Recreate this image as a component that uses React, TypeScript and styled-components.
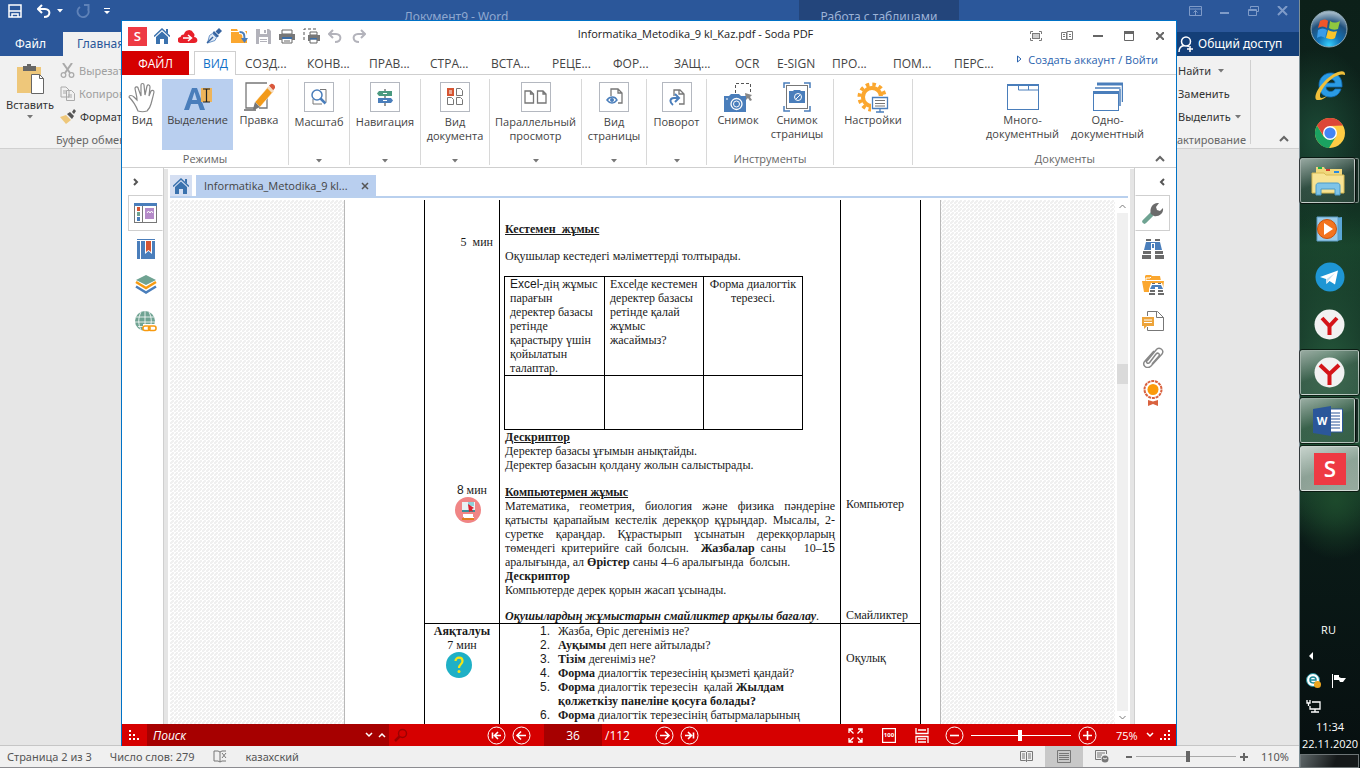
import React from 'react';
import styled, { createGlobalStyle, css } from 'styled-components';

const ui = `'Open Sans', 'Noto Sans', sans-serif`;
const wordFont = `'Noto Sans', 'Open Sans', sans-serif`;
const steel = '#4a7ebb';
const amber = '#fba72f';
const grey = '#7a7a7a';

const Global = createGlobalStyle`
  *, *::before, *::after { box-sizing: border-box; }
  body { margin: 0; font-family: ${ui}; font-size: 12px; color: #444; }
  button { font: inherit; color: inherit; background: none; border: 0; padding: 0; cursor: pointer; }
  input { font: inherit; border: 0; margin: 0; padding: 0; outline: none; }
  svg { display: block; flex: none; }
  p, ol { margin: 0; padding: 0; }
`;

/* ---------- Desktop ---------- */

const Desktop = styled.div`
  display: flex;
  height: 100vh;
  overflow: hidden;
`;

/* ---------- Word window ---------- */

const WordWindow = styled.div`
  flex: 1;
  min-width: 0;
  position: relative;
  display: flex;
  flex-direction: column;
  background: #e6e6e6;
  font-family: ${wordFont};
`;

const WordTitle = styled.header`
  display: flex;
  align-items: flex-start;
  height: 32px;
  background: #2b579a;
  color: #8fa8d0;
`;

const QuickAccess = styled.div`
  display: flex;
  align-items: center;
  height: 22px;
  width: 404px;
  padding-left: 8px;
`;

const WordCaption = styled.span`
  width: 395px;
  line-height: 34px;
`;

const ContextTab = styled.span`
  width: 160px;
  height: 32px;
  line-height: 34px;
  background: #23457b;
  text-align: center;
  color: #9db3d8;
`;

const WordControls = styled.div`
  margin-left: auto;
  display: flex;
  align-items: center;
  height: 22px;
  gap: 15px;
  padding-right: 10px;
`;

const WordTabs = styled.div`
  display: flex;
  height: 24px;
  background: #2b579a;
  color: #fff;
  line-height: 24px;
`;

const WordTab = styled.button<{ $on?: boolean }>`
  padding: 0 ${p => (p.$on ? 14 : 15)}px;
  width: ${p => (p.$on ? 100 : 63)}px;
  text-align: left;
  font-size: 12px;
  ${p => p.$on && css`background: #f1f1f1; color: #2b579a;`}
`;

const ShareButton = styled.button`
  margin-left: auto;
  width: 132px;
  padding-left: 11px;
  display: flex;
  align-items: center;
  gap: 4px;
  background: #143f78;
  color: #fff;
  white-space: nowrap;
`;

const WordRibbon = styled.div`
  display: flex;
  justify-content: space-between;
  height: 93px;
  background: #f1f1f1;
  border-bottom: 1px solid #d0d0d0;
`;

const ClipboardGroup = styled.div`
  display: grid;
  grid-template-columns: 60px 128px;
  grid-template-rows: 75px 17px;
`;

const PasteButton = styled.button`
  display: flex;
  flex-direction: column;
  align-items: center;
  padding-top: 7px;
  color: #333;
  font-size: 11px;
  line-height: 20px;
`;

const CommandList = styled.div`
  display: flex;
  flex-direction: column;
  padding-top: 3px;
`;

const Command = styled.button<{ $dim?: boolean }>`
  display: flex;
  align-items: center;
  gap: 4px;
  height: 23px;
  font-size: 11px;
  color: ${p => (p.$dim ? '#a0a0a0' : '#333')};
  white-space: nowrap;
`;

const GroupName = styled.span`
  grid-column: 1 / 3;
  text-align: center;
  font-size: 11px;
  color: #666;
  line-height: 18px;
  white-space: nowrap;
`;

const EditingGroup = styled.div`
  display: flex;
`;

const EditingBody = styled.div`
  margin-top: 4px;
  height: 84px;
  width: 94px;
  padding-right: 4px;
  border-right: 1px solid #d0d0d0;
  text-align: right;
`;

const EditingList = styled.div`
  margin-top: -4px;
  padding: 3px 0 0 21px;
  height: 75px;
`;

const Collapse = styled.button`
  width: 48px;
  display: flex;
  align-items: flex-end;
  justify-content: center;
  padding: 0 0 5px 18px;
`;

const WordStatus = styled.footer`
  margin-top: auto;
  height: 23px;
  display: flex;
  align-items: center;
  background: #f0f0f0;
  border-top: 1px solid #c6c6c6;
  border-bottom: 1px solid #8c8c90;
  color: #555;
  font-size: 11px;
  padding-left: 7px;
`;

const StatusItem = styled.span`
  margin-right: 18px;
  white-space: nowrap;
`;

const StatusRight = styled.div`
  margin-left: auto;
  display: flex;
  align-items: center;
  height: 100%;
  padding-right: 10px;
`;

const ViewButton = styled.button<{ $on?: boolean }>`
  width: 38px;
  height: 100%;
  display: flex;
  align-items: center;
  justify-content: center;
  background: ${p => (p.$on ? '#c8c8c8' : 'none')};
`;

const StepButton = styled.button`
  width: 15px;
  height: 20px;
  display: flex;
  align-items: center;
  justify-content: center;
`;

const Range = styled.input<{ $c: string; $t: string }>`
  appearance: none;
  width: 100px;
  height: 12px;
  background: linear-gradient(${p => p.$c}, ${p => p.$c}) center / 100% 1px no-repeat;
  &::-webkit-slider-thumb {
    appearance: none;
    width: 4px;
    height: 11px;
    background: ${p => p.$t};
    border: 0;
  }
`;

const ZoomValue = styled.span`
  width: 38px;
  text-align: right;
`;

/* ---------- Soda PDF window ---------- */

const SodaWindow = styled.section`
  position: absolute;
  inset: 20px 122px 22px 121px;
  display: flex;
  flex-direction: column;
  background: #fff;
  border: 1px solid #0072c6;
  border-bottom: 0;
  font-family: ${ui};
`;

const SodaTitle = styled.header`
  display: flex;
  align-items: center;
  height: 30px;
  padding: 0 1px 0 6px;
`;

const ToolButton = styled.button<{ $w?: number; $mr?: number }>`
  width: ${p => p.$w || 24}px;
  height: 26px;
  margin-right: ${p => p.$mr || 0}px;
  display: flex;
  align-items: center;
  justify-content: center;
`;

const Caption = styled.h1`
  flex: 1;
  margin: 0;
  text-align: center;
  font-size: 11px;
  line-height: 26px;
  height: 30px;
  font-weight: 400;
  color: #222;
  white-space: nowrap;
`;

const TabRow = styled.nav`
  display: flex;
  height: 24px;
  border-bottom: 1px solid #cfcfcf;
`;

const FileTab = styled.button`
  width: 67px;
  height: 24px;
  margin-right: 5px;
  background: #d50000;
  color: #fff;
`;

const Tab = styled.button<{ $w?: number; $on?: boolean }>`
  width: ${p => p.$w || 61}px;
  height: 24px;
  text-align: left;
  padding: 0 0 0 9px;
  white-space: nowrap;
  ${p => p.$on && css`
    padding: 0 8px;
    background: #fff;
    color: #1070c8;
    border: 1px solid #cfcfcf;
    border-bottom: 0;
  `}
`;

const Account = styled.div`
  margin-left: auto;
  display: flex;
  align-items: center;
  gap: 6px;
  height: 16px;
  padding-right: 18px;
  font-size: 11px;
  a { color: #2a63ae; text-decoration: none; white-space: nowrap; }
`;

const Ribbon = styled.div`
  display: flex;
  height: 93px;
  padding-top: 4px;
  border-bottom: 1px solid #cfcfcf;
`;

const Group = styled.div<{ $w?: number }>`
  ${p => (p.$w ? css`width: ${p.$w}px;` : css`flex: 1;`)}
  height: 86px;
  border-right: ${p => (p.$w ? '1px solid #d8d8d8' : '0')};
  display: flex;
  flex-direction: column;
  flex-shrink: ${p => (p.$w ? 0 : 1)};
`;

const GroupButtons = styled.div<{ $at?: string }>`
  display: flex;
  height: 71px;
  justify-content: ${p => p.$at || 'center'};
  padding-right: ${p => (p.$at === 'flex-end' ? 26 : 0)}px;
`;

const GroupFoot = styled.div<{ $end?: boolean; $low?: boolean }>`
  display: flex;
  align-items: center;
  justify-content: ${p => (p.$end ? 'flex-end' : 'center')};
  gap: 60px;
  padding: ${p => (p.$low ? 6 : 2)}px ${p => (p.$end ? 11 : 0)}px 0 0;
  height: 15px;
  font-size: 11px;
  color: #666;
`;

const BigButton = styled.button<{ $w: number; $on?: boolean }>`
  width: ${p => p.$w}px;
  height: 71px;
  padding-top: 2px;
  display: flex;
  flex-direction: column;
  align-items: center;
  font-size: 11px;
  line-height: 14px;
  background: ${p => (p.$on ? '#b9cfef' : 'none')};
`;

const IconSlot = styled.span`
  display: flex;
  align-items: center;
  justify-content: center;
  height: 32px;
`;

const IconBox = styled.span`
  width: 30px;
  height: 30px;
  margin: 1px 0 3px;
  border: 1px solid #b4b8c0;
  display: flex;
  align-items: center;
  justify-content: center;
`;

const Body = styled.div`
  flex: 1;
  min-height: 0;
  display: flex;
`;

const Side = styled.aside<{ $right?: boolean }>`
  width: 42px;
  display: flex;
  flex-direction: column;
  align-items: ${p => (p.$right ? 'flex-start' : 'flex-end')};
  padding-top: 1px;
  ${p => (p.$right ? 'border-left' : 'border-right')}: 1px solid #cfcfcf;
`;

const SideToggle = styled.button<{ $right?: boolean }>`
  width: 41px;
  height: 26px;
  display: flex;
  align-items: center;
  justify-content: ${p => (p.$right ? 'flex-end' : 'flex-start')};
  padding: 0 10px;
`;

const SideButton = styled.button<{ $on?: boolean; $right?: boolean }>`
  width: 35px;
  height: 36px;
  display: flex;
  align-items: center;
  justify-content: center;
  ${p => p.$on && css`
    border: 1px solid #cfcfcf;
    border-${p.$right ? 'left' : 'right'}-color: #fff;
  `}
`;

const Splitter = styled.div`
  width: 4px;
  margin-top: 1px;
  background: #e5e5e5;
`;

const Center = styled.main`
  flex: 1;
  min-width: 0;
  display: flex;
  flex-direction: column;
  padding: 0 2px;
`;

const DocTabs = styled.div`
  display: flex;
  gap: 4px;
  height: 30px;
  padding-top: 7px;
  border-bottom: 2px solid #b9d0ee;
  margin-bottom: 2px;
`;

const HomeTab = styled.button`
  width: 22px;
  background: #d5dff2;
  display: flex;
  align-items: center;
  justify-content: center;
`;

const DocTab = styled.div`
  display: flex;
  align-items: center;
  justify-content: space-between;
  width: 180px;
  padding: 0 7px 0 8px;
  background: #b9cfef;
  font-size: 11px;
  white-space: nowrap;
`;

const Viewer = styled.div`
  flex: 1;
  min-height: 0;
  display: flex;
`;

const Canvas = styled.div`
  flex: 1;
  min-width: 0;
  overflow: hidden;
  display: flex;
  justify-content: center;
  align-items: flex-start;
  background: linear-gradient(135deg, #fff 0 37%, #f0f0f0 37% 63%, #fff 63%) 0 0 / 4px 4px;
`;

const Scroll = styled.div`
  width: 13px;
  padding-left: 2px;
  display: flex;
  flex-direction: column;
`;

const ScrollButton = styled.button`
  height: 13px;
  display: flex;
  align-items: center;
  justify-content: center;
`;

const Track = styled.div`
  flex: 1;
  background: #f0f0f0;
  display: flex;
  flex-direction: column;
`;

const TrackSpace = styled.div<{ $grow: number }>`
  flex: ${p => p.$grow};
`;

const Thumb = styled.div`
  height: 20px;
  background: #dadada;
`;

/* ---------- Document page ---------- */

const Page = styled.article`
  width: 597px;
  padding-left: 79px;
  background: #fff;
  border: solid #b8b8b8;
  border-width: 0 1px;
  font-family: 'Liberation Serif', serif;
  font-size: 12px;
  line-height: 14px;
  color: #1a1a1a;
  white-space: nowrap;
`;

const Plan = styled.table`
  border-collapse: collapse;
  table-layout: fixed;
  width: 497px;
  td { vertical-align: top; padding: 0; border: 1px solid #000; }
  tr:first-child td { border-top: 0; }
`;

const Inner = styled.table`
  border-collapse: collapse;
  table-layout: fixed;
  width: 299px;
  margin-left: -1px;
  && td { border: 1px solid #000; padding: 0 5px; }
  && tr:first-child td { border-top: 1px solid #000; }
  && tr:first-child td:last-child { text-align: center; }
  tr:last-child { height: 54px; }
`;

const CellBody = styled.div<{ $top?: number; $align?: string }>`
  padding: ${p => p.$top || 0}px 5px 0;
  text-align: ${p => p.$align || 'left'};
`;

const Gap = styled.div<{ $h: number }>`
  height: ${p => p.$h}px;
`;

const Heading = styled.p`
  font-weight: 700;
  text-decoration: underline;
`;

const Justified = styled.p`
  text-align: justify;
  text-align-last: justify;
`;

const Sans = styled.span`
  font-family: 'Liberation Sans', sans-serif;
  line-height: 12px;
`;

const TimeBlock = styled.div<{ $r: number }>`
  padding-right: ${p => p.$r}px;
  text-align: right;
`;

const Badge = styled.div<{ $r: number }>`
  display: flex;
  justify-content: flex-end;
  padding-right: ${p => p.$r}px;
`;

const Questions = styled.ol`
  list-style: none;
  counter-reset: q;
  padding-left: 40px;
  li { display: flex; counter-increment: q; }
  li::before {
    content: counter(q) '.';
    width: 18px;
    font-family: 'Liberation Sans', sans-serif;
  }
`;

/* ---------- Soda footer ---------- */

const SodaFooter = styled.footer`
  height: 22px;
  display: flex;
  align-items: center;
  background: #d60000;
  color: #fff;
`;

const Grip = styled.div`
  width: 25px;
  padding-left: 7px;
`;

const SearchBox = styled.label`
  width: 242px;
  height: 22px;
  display: flex;
  align-items: center;
  gap: 5px;
  padding: 0 3px 0 6px;
  background: #a60000;
  input {
    flex: 1;
    min-width: 0;
    background: none;
    color: #fff;
    font-style: italic;
    &::placeholder { color: #fff; }
  }
`;

const SearchGo = styled.button`
  width: 24px;
  padding-left: 5px;
  margin-right: 71px;
`;

const Pager = styled.div`
  display: flex;
  align-items: center;
  flex: 1;
`;

const RoundButton = styled.button`
  width: 25px;
  display: flex;
  justify-content: center;
`;

const PageField = styled.input`
  width: 58px;
  height: 22px;
  margin: 0 3px 0 10px;
  background: #a60000;
  color: #fff;
  text-align: center;
`;

const PageCount = styled.span`
  width: 47px;
`;

const FootRight = styled.div`
  display: flex;
  align-items: center;
`;

const FootButton = styled.button<{ $w?: number }>`
  width: ${p => p.$w || 33}px;
  display: flex;
  justify-content: center;
`;

const FootZoom = styled.span`
  margin-left: 12px;
  width: 24px;
  font-size: 11px;
`;

/* ---------- Taskbar ---------- */

const Taskbar = styled.aside`
  width: 61px;
  flex: none;
  display: flex;
  flex-direction: column;
  border-left: 1px solid #7d8f96;
  color: #fff;
  background:
    radial-gradient(ellipse 50px 60px at 60% 65%, #1d4a2c 0, transparent 100%),
    radial-gradient(ellipse 60px 90px at 30% 18%, #1c4a36 0, transparent 100%),
    radial-gradient(ellipse 80px 160px at 50% 48%, #24563a 0, transparent 100%),
    linear-gradient(#0c2019 0, #0e231c 22%, #164029 32%, #0d231c 44%, #1b4a30 58%, #0a1a17 70%, #070f10 100%);
`;

const StartButton = styled.button`
  height: 56px;
  margin-top: 1px;
  margin-bottom: 2px;
  padding-right: 2px;
  display: flex;
  align-items: center;
  justify-content: center;
`;

const TaskButton = styled.button<{ $on?: boolean; $stack?: boolean; $lit?: boolean }>`
  height: 45px;
  flex: none;
  margin: 3px ${p => (p.$stack ? 5 : 1)}px 0 0;
  display: flex;
  align-items: center;
  justify-content: center;
  border: 1px solid transparent;
  border-radius: 2px;
  ${p => p.$on && css`
    border-color: rgba(255, 255, 255, 0.5);
    outline: 1px solid rgba(0, 0, 0, 0.6);
    background: linear-gradient(160deg, rgba(255,255,255,${p.$lit ? 0.75 : 0.55}) 0, rgba(255,255,255,${p.$lit ? 0.5 : 0.12}) 50%, rgba(255,255,255,${p.$lit ? 0.55 : 0.1}) 100%);
  `}
  ${p => p.$stack && css`box-shadow: 4px 0 0 -1px rgba(10, 30, 22, 0.9), 4px 0 0 0 rgba(255, 255, 255, 0.45);`}
`;

const Tray = styled.div`
  margin-top: auto;
  display: flex;
  flex-direction: column;
  align-items: center;
  font-size: 12px;
  line-height: 17px;
`;

const TrayRow = styled.div`
  align-self: stretch;
  display: flex;
  align-items: center;
  gap: 9px;
  height: 25px;
  padding-left: 6px;
`;

const Lang = styled.span`
  line-height: 26px;
  font-size: 11px;
  padding-right: 3px;
`;

const Clock = styled.time`
  font-size: 11px;
`;

const ShowDesktop = styled.button`
  align-self: stretch;
  height: 14px;
  margin: 2px 1px 0 0;
  border: 1px solid #6d7476;
  background: linear-gradient(110deg, #5d6567, #15191a 60%);
`;

/* ---------- Icons ---------- */

const Svg = ({ w, h, children, vb }: { w: number; h: number; vb?: string; children: React.ReactNode }) => (
  <svg width={w} height={h} viewBox={vb || `0 0 ${w} ${h}`} fill="none" aria-hidden="true">{children}</svg>
);

const Chevron = ({ dir, c = grey, s = 2 }: { dir: 'up' | 'down' | 'left' | 'right'; c?: string; s?: number }) => {
  const d = { up: 'M1 6l4-4 4 4', down: 'M1 2l4 4 4-4', left: 'M6 2L3 5l3 3', right: 'M2 2l3 3-3 3' }[dir];
  const flat = dir === 'up' || dir === 'down';
  return <Svg w={flat ? 10 : 8} h={flat ? 8 : 10}><path d={d} stroke={c} strokeWidth={s} /></Svg>;
};

const Caret = ({ c = '#777' }: { c?: string }) => <Svg w={6} h={4}><path d="M0 0h6L3 3.500z" fill={c} /></Svg>;

const HomeIcon = () => (
  <Svg w={16} h={16}>
    <path d="M12 1h2v5l-2-2z" fill="#3a72ae" />
    <path d="M0 8.500L8 1l8 7.500" stroke="#3a72ae" strokeWidth="1.500" />
    <path d="M2 9l6-5.500L14 9v7h-4v-5H6v5H2z" fill="#3a72ae" />
  </Svg>
);

const SodaLogo = ({ s }: { s: number }) => (
  <svg width={s} height={s} viewBox="0 0 20 20" aria-hidden="true">
    <rect width="20" height="20" fill="#ee3a43" />
    <text x="10" y="15" textAnchor="middle" fontFamily="Open Sans, sans-serif" fontWeight="600" fontSize="14" fill="#fff">S</text>
  </svg>
);

const CloudIcon = () => (
  <Svg w={20} h={14}>
    <path d="M3 14a3 3 0 0 1-.5-6A3 3 0 0 1 6 5.500 5 5 0 0 1 15.500 4c1.500 1 1 3 .5 4 4 0 5 6 0 6z" fill="#e8202a" />
    <path d="M5 9h8M10 6l3.500 3-3.500 3" stroke="#fff" strokeWidth="1.500" />
  </Svg>
);

const PenIcon = () => (
  <Svg w={16} h={16}>
    <path d="M9.500 3.500L13 0l3 3-3.500 3.500z" fill="#3563a0" />
    <path d="M8 3l5 5-2 1.500L6.500 5z" fill="#3563a0" />
    <path d="M6.500 5.500l4 4-1.500 3-7.500 2.500 2-7.500z" stroke="#6a94c8" fill="#dfe9f5" />
    <path d="M1 15l6-6" stroke="#3563a0" strokeWidth="1.500" />
  </Svg>
);

const FolderIcon = () => (
  <Svg w={17} h={16}>
    <path d="M0 1h6l1 2h9v12H0z" fill={amber} />
    <path d="M0 3.500h9" stroke="#fff" />
    <path d="M8 3.500c5 0 6 2 6 7" stroke="#fff" strokeWidth="5" />
    <path d="M8.500 4c4.500 0 5 2 5 7" stroke={steel} strokeWidth="2" />
    <path d="M10 10h7l-3.500 5z" fill={steel} />
  </Svg>
);

const SaveIcon = ({ c = '#b3b3bb' }: { c?: string }) => (
  <Svg w={15} h={15}>
    <path d="M0 0h13l2 2v13H0z" fill={c} />
    <path d="M4 0h7v5H4zM3 8h9v7H3z" fill="#fff" />
    <path d="M8 1h2v3H8zM4 10h7v1H4zM4 12h7v1H4z" fill={c} />
  </Svg>
);

const PrinterIcon = () => (
  <Svg w={16} h={15}>
    <path d="M3 1h10v4H3zM3 9h10v5H3z" fill="#fff" stroke="#666" />
    <path d="M0 5h16v6h-3V9H3v2H0z" fill="#777" />
    <path d="M3 8h10v2H3z" fill="#3b6ea8" />
    <path d="M5 12h6" stroke="#666" />
  </Svg>
);

const PrintAreaIcon = () => (
  <Svg w={17} h={16}>
    <path d="M1 12V1h13" stroke="#555" strokeDasharray="3 2" />
    <path d="M7 4h7v3H7zM7 11h7v4H7z" fill="#fff" stroke="#666" />
    <path d="M5 7h12v6h-3v-2H7v2H5z" fill="#777" />
    <path d="M7 10h7v1.500H7z" fill="#3b6ea8" />
  </Svg>
);

const UndoIcon = ({ c = '#b3b3bb', flip }: { c?: string; flip?: boolean }) => (
  <svg width="14" height="14" viewBox="0 0 14 14" fill="none" aria-hidden="true">
    <g transform={flip ? 'matrix(-1 0 0 1 14 0)' : undefined}>
      <path d="M5 1L1 5l4 4M1 5h7c6 0 6 8-1 8" stroke={c} strokeWidth="2" />
    </g>
  </svg>
);

const HandIcon = () => (
  <Svg w={28} h={32}>
    <path d="M10 30C8 25 5 20 1 16c0-2 3-2 5 0l3 3c0-5-2-9-2-12 1-2 3-1 3 0l3 8V4c0-2 3-2 3 0l1 10 2-9c1-2 3-1 3 1l-1 9 2-5c1-1 3-1 3 1-1 5-2 8-3 12-1 4-3 6-4 7-3 1-6 1-9 0z" stroke="#888" strokeWidth="1.200" />
  </Svg>
);

const SelectIcon = () => (
  <Svg w={30} h={30}>
    <path fillRule="evenodd" d="M1 28L9 6h5l8 22h-5l-2-6H8l-2 6zM9 18h5l-2.500-8z" fill={steel} />
    <rect x="18" y="6" width="11" height="14" fill="#eeb45a" />
    <path d="M20 7h3l.5 1 .5-1h3M23.500 8v11M20 20h3l.5-1 .5 1h3" stroke="#222" strokeWidth="1.200" />
  </Svg>
);

const EditIcon = () => (
  <Svg w={32} h={30}>
    <path d="M24 1H3v25h8M24 16v10h-8" stroke="#777" strokeWidth="1.300" />
    <path d="M1 28h12" stroke="#666" strokeWidth="1.500" />
    <path d="M25 5l5 5-13 15-5-5z" fill="#f29a1a" stroke="#fff" strokeWidth=".5" />
    <path d="M26 3.500l2-1.500c2-1 5 2 4 4l-2 2.500z" fill="#d9583c" />
    <path d="M24 6l2-2 5 5-2 2z" fill="#f4dcc0" />
    <path d="M12 20l5 5-6 3-1-1z" fill="#777" />
  </Svg>
);

const ZoomIcon = () => (
  <Svg w={18} h={18}>
    <path d="M10 1.500h6v13M3 11v5h9" stroke="#777" />
    <circle cx="7" cy="7" r="5" fill="#fff" stroke={steel} strokeWidth="1.500" />
    <path d="M10.500 10.500l5 5" stroke={steel} strokeWidth="2.500" />
  </Svg>
);

const SignIcon = () => (
  <Svg w={16} h={17}>
    <path d="M8 0v17" stroke="#777" strokeWidth="1.500" />
    <path d="M2 2h13v5H2L0 4.500z" fill="#4b9a80" />
    <path d="M1 9h13l2 2.500-2 2.500H1z" fill={steel} />
    <path d="M6 4.500h4M6 11.500h4" stroke="#fff" />
  </Svg>
);

const DocViewIcon = () => (
  <Svg w={16} h={18}>
    <path d="M0 0h7v8H0z" fill="#d65532" />
    <path d="M2 3h3M2 5h3" stroke="#fff" />
    {[[9, 0], [0, 9], [9, 9]].map(([x, y]) => (
      <path key={`${x}-${y}`} d={`M${x + 0.5} ${y + 0.5}h4l2 2v5h-6z`} stroke="#777" />
    ))}
  </Svg>
);

const TwoPagesIcon = () => (
  <Svg w={24} h={14}>
    <path d="M1 1h5.500l3 3v9H1zM6.500 1v3h3M13.500 1H19l3 3v9h-8.500zM19 1v3h3" stroke="#777" strokeWidth="1.300" />
  </Svg>
);

const PageViewIcon = () => (
  <Svg w={17} h={18}>
    <path d="M5 8V1h7l4 4v10h-4M12 1v4h4" stroke="#777" strokeWidth="1.300" />
    <path d="M1 12c3-4 8-4 10 0-3 4-7 4-10 0z" fill="#fff" stroke={steel} strokeWidth="1.500" />
    <circle cx="6" cy="12" r="2" fill={steel} />
  </Svg>
);

const RotateIcon = () => (
  <Svg w={16} h={17}>
    <path d="M5 7V1h6l4 4v10h-5M10 1v4h5" stroke="#777" strokeWidth="1.300" />
    <path d="M4 16c-4-3-3-7 1-7h4M6 5l4 4-4 4" stroke={steel} strokeWidth="2" />
  </Svg>
);

const SnapshotIcon = () => (
  <Svg w={30} h={32}>
    <path d="M12.500 12V2.500h15V12" stroke="#555" strokeDasharray="3 2" />
    <path d="M22 12l7 2-2 2 2 3-2 1-2-3-2 2z" fill="#888" />
    <path d="M1 15h5l2-2h8l2 2h5v16H1z" fill={steel} />
    <circle cx="13.500" cy="23" r="5.500" stroke="#fff" strokeWidth="1.300" />
    <circle cx="13.500" cy="23" r="3" stroke="#fff" strokeWidth="1" />
    <path d="M3 18h2" stroke="#fff" />
  </Svg>
);

const PageSnapshotIcon = () => (
  <Svg w={28} h={30}>
    <path d="M1 6V1h6M21 1h6v5M1 24v5h6M21 29h6v-5" stroke={steel} strokeWidth="1.500" />
    <rect x="3.500" y="3.500" width="21" height="23" stroke="#777" />
    <path d="M6 9h4l1-1h6l1 1h4v12H6z" fill={steel} />
    <circle cx="15" cy="15" r="3.500" stroke="#fff" />
    <path d="M13 17l4-4" stroke="#fff" />
  </Svg>
);

const SettingsIcon = () => (
  <Svg w={32} h={32}>
    <circle cx="15" cy="16" r="9" stroke={amber} strokeWidth="4" />
    <circle cx="15" cy="16" r="12.500" stroke={amber} strokeWidth="4" strokeDasharray="3.500 3.040" />
    <path d="M14 15h18v17H14z" fill="#fff" />
    <path d="M15.500 16.500h15v11h-15zM23 28v3M19 31h8" stroke={steel} strokeWidth="1.300" />
    <path d="M18 19.500h10M18 22.500h10M18 25h10" stroke="#777" />
  </Svg>
);

const MultiDocIcon = () => (
  <Svg w={32} h={28}>
    <rect x="0.500" y="1.500" width="31" height="25" stroke={steel} />
    <path d="M0 1h32v2H0z" fill={steel} />
    <path d="M11.500 3v4h20M21.500 3v4" stroke={steel} />
  </Svg>
);

const SingleDocIcon = () => (
  <Svg w={30} h={30}>
    <path d="M4 2h26" stroke={steel} strokeWidth="3" />
    <path d="M29.500 3v17M27 7v17M2 6h25.500" stroke={steel} strokeWidth="1.500" />
    <rect x="0.500" y="9.500" width="25" height="19" fill="#fff" stroke={steel} />
    <path d="M0 9h26v3H0z" fill={steel} />
  </Svg>
);

const PanelIcon = () => (
  <Svg w={23} h={20}>
    <rect x="0.500" y="0.500" width="22" height="19" stroke="#777" />
    <path d="M0 0h23v3H0z" fill={steel} />
    <path d="M8.500 3v17" stroke="#777" />
    <path d="M3 4h3v4H3z" fill="#d65532" /><path d="M3 9h3v4H3z" fill="#6fa392" /><path d="M3 14h3v4H3z" fill={steel} />
    <path d="M11 5h9v11h-9z" fill="#b58bc9" /><path d="M13 10l1.500-2 1.500 2 1.500-2 1.500 2" stroke="#fff" />
  </Svg>
);

const BookmarkIcon = () => (
  <Svg w={18} h={20}>
    <path d="M0 0h18v1H0zM0 2h18v18H0z" fill={steel} />
    <path d="M3.500 2v18" stroke="#fff" /><path d="M8 2h7v13l-3.500-3L8 15z" fill="#fff" /><path d="M9 2h5v11l-2.500-2L9 13z" fill="#d65532" />
  </Svg>
);

const LayersIcon = () => (
  <Svg w={22} h={20}>
    <path d="M11 0l10 5-10 5L1 5z" fill="#6fa392" />
    <path d="M1 7l10 6 10-6" stroke="#f79a10" strokeWidth="2.500" />
    <path d="M1 11.500l10 6 10-6" stroke={steel} strokeWidth="2.500" />
  </Svg>
);

const GlobeIcon = () => (
  <Svg w={22} h={21}>
    <circle cx="10" cy="10" r="10" fill="#6fa392" />
    <path d="M1 6h18M0 11h20M3 15.500h14M10 0v20M6 1c-3 6-3 12 0 18M14 1c3 6 3 12 0 18" stroke="#fff" strokeWidth=".8" />
    <path d="M8 13h14v8H8z" fill="#fff" />
    <rect x="8" y="15" width="7" height="4.500" rx="2" stroke="#f79a10" strokeWidth="1.600" />
    <rect x="13.500" y="15" width="7.500" height="4.500" rx="2" stroke="#f79a10" strokeWidth="1.600" />
  </Svg>
);

const WrenchIcon = () => (
  <Svg w={22} h={22}>
    <path d="M2.500 19.500l7-7" stroke="#6fa392" strokeWidth="4.500" strokeLinecap="round" />
    <path d="M9 12c-2-6 2-12 8-11l-3 4 1 3 3 1 3-3c1 6-5 9-9 8z" fill="#6b6b6b" />
  </Svg>
);

const BinocularsIcon = () => (
  <Svg w={22} h={20}>
    <path d="M4 0h5v2H4zM13 0h5v2h-5zM1 12h8v3H1zM13 12h8v3h-8zM0 16h9v4H0zM13 16h9v4h-9z" fill="#6b6b6b" />
    <path d="M4 3h14l2 8h-7V8H9v3H2z" fill={steel} />
    <rect x="9.500" y="4.500" width="3" height="5" fill={steel} stroke="#fff" />
  </Svg>
);

const FolderFindIcon = () => (
  <Svg w={22} h={20}>
    <path d="M3 6V1l1-1h5l1 1h8l1 5h3l-1 9v2H2L0 6z" fill={amber} />
    <path d="M4 6V3h4l1-1M4 5.500h16" stroke="#fff" />
    <path d="M9 8h11l2 6v6H7v-6z" fill="#fff" />
    <path d="M10 8h3v1h-3zM16 8h3v1h-3zM8 15h5v2H8zM16 15h5v2h-5zM7 18h6v2H7zM16 18h6v2h-6z" fill="#6b6b6b" />
    <path d="M10 10h9l2 4h-5v-2h-3v2H8z" fill={steel} />
  </Svg>
);

const CommentIcon = () => (
  <Svg w={22} h={22}>
    <path d="M5.500 6V1.500h10l6 6v13h-16V17" stroke="#777" /><path d="M14.500 1v6.500h7" stroke="#777" />
    <path d="M0 7h12v9H5l-3 3v-3H0z" fill="#eda43a" /><path d="M2 10h8M2 12.500h8" stroke="#fff" />
  </Svg>
);

const ClipIcon = () => (
  <Svg w={22} h={22}>
    <path d="M5 15L14 4c3-4 9 0 6 4L9 20c-4 4-10-1-6-5L12 5M14 8l-6 8c-2 3-5 0-3-2M14 8c2-2 4 0 3 2l-7 8" stroke="#888" strokeWidth="1.500" />
  </Svg>
);

const SealIcon = () => (
  <Svg w={20} h={26}>
    <path d="M5 20l5 1.500 5-1.500v6l-5-2-5 2z" fill="#d9623f" />
    <circle cx="10" cy="9.500" r="8.500" fill="#fff" stroke="#d9623f" strokeWidth="2" strokeDasharray="3 .8" />
    <circle cx="10" cy="9.500" r="5.500" fill="#fb9a0a" />
  </Svg>
);

const RoundArrow = ({ kind }: { kind: 'first' | 'prev' | 'next' | 'last' | 'minus' | 'plus' }) => {
  const d = {
    first: 'M5.500 6.500v6M14 9.500H8M11 6L7.500 9.500 11 13',
    prev: 'M14 9.500H5M9 5.500L5 9.500l4 4',
    next: 'M5 9.500h9M10 5.500l4 4-4 4',
    last: 'M13.500 6.500v6M5 9.500h6M8 6l3.500 3.500L8 13',
    minus: 'M5 9.500h9',
    plus: 'M5 9.500h9M9.500 5v9',
  }[kind];
  return (
    <Svg w={19} h={19}>
      <circle cx="9.500" cy="9.500" r="8.500" stroke="#fff" />
      <path d={d} stroke="#fff" strokeWidth="1.600" />
    </Svg>
  );
};

const ComputerBadge = () => (
  <Svg w={26} h={26}>
    <circle cx="13" cy="13" r="13" fill="#f08585" />
    <path d="M7 5h13v10H7z" fill="#e8f2f4" /><path d="M7 13h13v2H7z" fill="#3f8f9a" /><path d="M13 5h6v4h-6z" fill="#8ed0d8" />
    <path d="M13 7l6 4-2 1 1 3-2-1-2 1z" fill="#d81e2c" />
    <path d="M8 17h10v3H8z" fill="#fff" /><path d="M7 21h12v2H7z" fill="#e27d1f" /><path d="M9 20h10v1H9z" fill="#fff" />
  </Svg>
);

const QuestionBadge = () => (
  <Svg w={26} h={26}>
    <circle cx="13" cy="13" r="13" fill="#1fb0c6" />
    <path d="M9.500 9c0-4.500 7-4.500 7 0 0 3.500-3.500 3-3.500 7" stroke="#f5e616" strokeWidth="2.200" />
    <circle cx="13" cy="19.500" r="1.500" fill="#f5e616" />
  </Svg>
);

const PasteIcon = () => (
  <Svg w={30} h={32}>
    <path d="M2 4h24v26H2z" fill="#eec77a" />
    <path d="M8 3h4V1h4v2h5v5H8z" fill="#666" />
    <path d="M16.500 11.500h8l4 4v15h-12z" fill="#fff" stroke="#666" /><path d="M24.500 11.500v4h4" stroke="#666" />
  </Svg>
);

const ScissorsIcon = () => (
  <Svg w={15} h={15}>
    <path d="M3 0l7 10M12 0L5 10" stroke="#aaa" strokeWidth="2" />
    <circle cx="3.500" cy="12" r="2.300" stroke="#aaa" strokeWidth="1.300" /><circle cx="11.500" cy="12" r="2.300" stroke="#aaa" strokeWidth="1.300" />
  </Svg>
);

const CopyIcon = () => (
  <Svg w={15} h={15}>
    <path d="M1 1h5l3 3v7H1zM6.500 4.500h5l3 3v7h-8z" fill="#f1f1f1" stroke="#aaa" /><path d="M3 5h3M3 7h3M8 9h4M8 11h4" stroke="#aaa" />
  </Svg>
);

const BrushIcon = () => (
  <Svg w={16} h={15}>
    <path d="M0 8l6-2 5 5-5 4z" fill="#eec77a" /><path d="M7 5l3-2 4 4-2 3zM12 3l2-3 2 2-2 3z" fill="#555" />
  </Svg>
);

const StartIcon = () => (
  <svg width="38" height="38" viewBox="0 0 38 38" aria-hidden="true">
    <defs>
      <radialGradient id="orb" cx=".5" cy=".95" r=".9">
        <stop offset="0" stopColor="#35d0ff" /><stop offset=".35" stopColor="#1372b5" /><stop offset=".7" stopColor="#20507c" /><stop offset="1" stopColor="#9fb6c6" />
      </radialGradient>
    </defs>
    <circle cx="19" cy="19" r="18" fill="url(#orb)" stroke="#8fa8b5" />
    <path d="M10 11c3-2 6-2 8 0l-1 7c-3-2-6-2-9 0z" fill="#f0562a" />
    <path d="M20 11c3 2 6 2 10 0l-2 8c-3 1-6 1-9-1z" fill="#8fc73e" />
    <path d="M8 20c3-2 6-2 9 0l-2 8c-3-2-5-2-8 0z" fill="#3b9ce8" />
    <path d="M18 20c4 2 6 2 9 1l-2 7c-3 2-6 1-9 0z" fill="#fbc52c" />
  </svg>
);

const IeIcon = () => (
  <Svg w={32} h={32}>
    <path d="M17 4c7 0 11 5 11 12v2H12c0 5 7 6 9 2h6c-2 6-6 8-11 8-7 0-11-5-11-12S10 4 17 4zM12 14h9c0-5-8-5-9 0z" fill="#2a9be4" fillRule="evenodd" stroke="#116bb5" strokeWidth=".8" />
    <path d="M31 6c1-8-13-2-21 7C2 21-2 32 5 31c3 0 6-2 8-4-4 2-7 3-7 0C6 19 22 2 31 6z" fill="#f0bf3a" />
  </Svg>
);

const ChromeIcon = () => (
  <Svg w={30} h={30}>
    <circle cx="15" cy="15" r="15" fill="#fc4" />
    <path d="M2 7.500A15 15 0 0 0 14 30l7-11.500L9 19z" fill="#1ba261" />
    <path d="M2 7.500A15 15 0 0 1 28 7.500L15 8l-7 9z" fill="#dc4638" />
    <circle cx="15" cy="15" r="7" fill="#fff" /><circle cx="15" cy="15" r="5.600" fill="#4285f4" />
  </Svg>
);

const ExplorerIcon = () => (
  <Svg w={34} h={32}>
    <path d="M5 2h8l1 2h17v16H5z" fill="#f0d77b" /><path d="M7 2h4v2H7z" fill="#22b14c" /><path d="M15 4h4v2h-4z" fill="#d43a2a" /><path d="M23 6h5v2h-5z" fill="#2a8be0" />
    <path d="M1 8h12l2 2h18v18H1z" fill="#f7e394" stroke="#d9bb55" />
    <path d="M5 30V21c0-2 1-3 3-3h18c2 0 3 1 3 3v9h-5v-6H10v6z" fill="#7fc4e8" stroke="#4a9ac8" />
  </Svg>
);

const MediaIcon = () => (
  <Svg w={27} h={26}>
    <path d="M19 2l7-1v23l-7 1z" fill="#5aa7d8" /><path d="M1 1h21v24H1z" fill="#9accea" stroke="#5c9cc4" />
    <circle cx="11" cy="13" r="9.500" fill="#f3741f" stroke="#c9520c" /><path d="M8 7l9 6-9 6z" fill="#fff" />
  </Svg>
);

const TelegramIcon = () => (
  <Svg w={30} h={30}>
    <circle cx="15" cy="15" r="14.500" fill="#1e96d4" /><path d="M5 15l18-6.500-3 14-5.500-3.500-3 3-.5-5z" fill="#fff" /><path d="M11 17.500l9-6.500-7 8-1.500 3z" fill="#c3dff0" />
  </Svg>
);

const YandexIcon = ({ big }: { big?: boolean }) => (
  <Svg w={31} h={31}>
    <circle cx="15.500" cy="15.500" r="15" fill="#f1f1f1" />
    <path d={big ? 'M6 8l9.500 9L25 8M15.500 16v12' : 'M8 9l7.500 8L23 9M15.500 16v10'} stroke="#d41418" strokeWidth="4" />
  </Svg>
);

const WordIcon = () => (
  <svg width="30" height="30" viewBox="0 0 30 30" aria-hidden="true">
    <path d="M17 3h12.500v23H17z" fill="#fff" stroke="#2b579a" />
    <path d="M18 7h9M18 10h9M18 13h9M18 16h9M18 19h9M18 22h9" stroke="#2b579a" strokeWidth="1.200" />
    <path d="M0 3l18-3v30L0 27z" fill="#2b579a" />
    <text x="9" y="19" textAnchor="middle" fontFamily="Open Sans, sans-serif" fontWeight="700" fontSize="11" fill="#fff">W</text>
  </svg>
);

const dots = (pts: number[][]) => pts.map(([x, y]) => <rect key={`${x},${y}`} x={x} y={y} width="2" height="2" fill="#fff" />);

/* ---------- Application ---------- */

const tabs: { label: string; w?: number }[] = [
  { label: 'СОЗД...', w: 62 }, { label: 'КОНВ...', w: 62 }, { label: 'ПРАВ...' }, { label: 'СТРА...' }, { label: 'ВСТА...' },
  { label: 'РЕЦЕ...' }, { label: 'ФОР...' }, { label: 'ЗАЩ...' }, { label: 'OCR', w: 42 }, { label: 'E-SIGN', w: 55 },
  { label: 'ПРО...' }, { label: 'ПОМ...' }, { label: 'ПЕРС...', w: 50 },
];

const boxed: { w: number; icon: React.ReactNode; lines: string[] }[] = [
  { w: 61, icon: <ZoomIcon />, lines: ['Масштаб'] },
  { w: 71, icon: <SignIcon />, lines: ['Навигация'] },
  { w: 69, icon: <DocViewIcon />, lines: ['Вид', 'документа'] },
  { w: 92, icon: <TwoPagesIcon />, lines: ['Параллельный', 'просмотр'] },
  { w: 65, icon: <PageViewIcon />, lines: ['Вид', 'страницы'] },
  { w: 60, icon: <RotateIcon />, lines: ['Поворот'] },
];

const Lines = ({ lines }: { lines: string[] }) => <>{lines.map(l => <span key={l}>{l}</span>)}</>;

const Big = ({ w, icon, lines, on }: { w: number; icon: React.ReactNode; lines: string[]; on?: boolean }) => (
  <BigButton $w={w} $on={on}><IconSlot>{icon}</IconSlot><Lines lines={lines} /></BigButton>
);

const DocumentPage = () => (
  <Page>
    <Plan>
      <colgroup><col width="75" /><col width="341" /><col width="80" /></colgroup>
      <tbody>
        <tr>
          <td>
            <Gap $h={35} />
            <TimeBlock $r={6}>5&nbsp; мин</TimeBlock>
            <Gap $h={234} />
            <TimeBlock $r={12}><Sans>8</Sans> мин</TimeBlock>
            <Badge $r={18}><ComputerBadge /></Badge>
          </td>
          <td>
            <CellBody $top={22}>
              <Heading>Кестемен&nbsp; жұмыс</Heading>
              <Gap $h={13} />
              <p>Оқушылар кестедегі мәліметтерді толтырады.</p>
              <Gap $h={13} />
              <Inner>
                <colgroup><col width="100" /><col width="99" /><col width="99" /></colgroup>
                <tbody>
                  <tr>
                    <td><Sans>Excel</Sans>-дің жұмыс<br />парағын<br />деректер базасы<br />ретінде<br />қарастыру үшін<br />қойылатын<br />талаптар.</td>
                    <td>Exce<Sans>l</Sans>де кестемен<br />деректер базасы<br />ретінде қалай<br />жұмыс<br />жасаймыз?</td>
                    <td>Форма диалогтік<br />терезесі.</td>
                  </tr>
                  <tr><td /><td /><td /></tr>
                </tbody>
              </Inner>
              <Heading>Дескриптор</Heading>
              <p>Деректер базасы ұғымын анықтайды.</p>
              <p>Деректер базасын қолдану жолын салыстырады.</p>
              <Gap $h={13} />
              <Heading>Компьютермен жұмыс</Heading>
              <Justified>
                Математика, геометрия, биология және физика пәндеріне<br />
                қатысты қарапайым кестелік дерекқор құрыңдар. Мысалы, 2-<br />
                суретке қараңдар. Құрастырып ұсынатын дерекқорларың<br />
                төмендегі критерийге сай болсын.&nbsp; <b>Жазбалар</b> саны &nbsp; 10–<Sans>15</Sans>
              </Justified>
              <p>аралығында, ал <b>Өрістер</b> саны 4–6 аралығында&nbsp; болсын.</p>
              <p><b>Дескриптор</b></p>
              <p>Компьютерде дерек қорын жасап ұсынады.</p>
              <Gap $h={12} />
              <p><b><i>Оқушылардың жұмыстарын смайликтер арқылы бағалау</i></b>.</p>
            </CellBody>
          </td>
          <td>
            <CellBody $top={297}>
              <p>Компьютер</p>
              <Gap $h={97} />
              <p>Смайликтер</p>
            </CellBody>
          </td>
        </tr>
        <tr>
          <td>
            <CellBody $align="center"><p><b>Аяқталуы</b></p><p>7 мин</p></CellBody>
            <Badge $r={27}><QuestionBadge /></Badge>
          </td>
          <td>
            <Questions>
              <li><span>Жазба, Өріс дегеніміз не?</span></li>
              <li><span><b>Ауқымы</b> деп неге айтылады?</span></li>
              <li><span><b>Тізім</b> дегеніміз не?</span></li>
              <li><span><b>Форма</b> диалогтік терезесінің қызметі қандай?</span></li>
              <li><span><b>Форма</b> диалогтік терезесін&nbsp; қалай <b>Жылдам<br />қолжеткізу панеліне қосуға болады?</b></span></li>
              <li><span><b>Форма</b> диалогтік терезесінің батырмаларының<br />қызметі қандай?</span></li>
            </Questions>
          </td>
          <td><CellBody $top={27}><p>Оқулық</p></CellBody></td>
        </tr>
      </tbody>
    </Plan>
  </Page>
);

const Soda = () => (
  <SodaWindow aria-label="Soda PDF">
    <SodaTitle>
      <SodaLogo s={19} />
      <ToolButton $w={29} aria-label="Домой"><HomeIcon /></ToolButton>
      <ToolButton aria-label="Облако"><CloudIcon /></ToolButton>
      <ToolButton $w={27} aria-label="Подпись"><PenIcon /></ToolButton>
      <ToolButton aria-label="Открыть"><FolderIcon /></ToolButton>
      <ToolButton aria-label="Сохранить"><SaveIcon /></ToolButton>
      <ToolButton aria-label="Печать"><PrinterIcon /></ToolButton>
      <ToolButton aria-label="Печать области"><PrintAreaIcon /></ToolButton>
      <ToolButton aria-label="Отменить"><UndoIcon /></ToolButton>
      <ToolButton aria-label="Вернуть"><UndoIcon flip /></ToolButton>
      <Caption>Informatika_Metodika_9 kl_Kaz.pdf - Soda PDF</Caption>
      <ToolButton $w={31} aria-label="Во весь экран">
        <Svg w={12} h={10}><path d="M.5 3V.5H3M9 .5h2.500V3M.5 7v2.500H3M9 9.500h2.500V7" stroke={grey} /><rect x="2.500" y="2.500" width="7" height="5" fill="#ccc" stroke={grey} /></Svg>
      </ToolButton>
      <ToolButton $w={31} aria-label="Режим чтения">
        <Svg w={12} h={10}><path d="M.5 1.500h5v7h-5zM6 .5h5.500v8H6zM2 3.500h2M2 5.500h2M8 3.500h2M8 5.500h2" stroke={grey} /></Svg>
      </ToolButton>
      <ToolButton $w={31} aria-label="Свернуть"><Svg w={10} h={2}><path d="M0 0h10v2H0z" fill="#666" /></Svg></ToolButton>
      <ToolButton $w={31} aria-label="Развернуть"><Svg w={10} h={10}><path d="M.5 1h9v8.500h-9z" stroke="#666" /><path d="M0 0h10v3H0z" fill="#666" /></Svg></ToolButton>
      <ToolButton $w={31} aria-label="Закрыть"><Svg w={8} h={8}><path d="M0 0l8 8M8 0L0 8" stroke="#666" strokeWidth="2" /></Svg></ToolButton>
    </SodaTitle>
    <TabRow>
      <FileTab>ФАЙЛ</FileTab>
      <Tab $w={42} $on>ВИД</Tab>
      {tabs.map(t => <Tab key={t.label} $w={t.w}>{t.label}</Tab>)}
      <Account>
        <Svg w={5} h={8}><path d="M.5 1v6l3.500-3z" stroke="#2a63ae" /></Svg>
        <a href="#login">Создать аккаунт / Войти</a>
      </Account>
    </TabRow>
    <Ribbon>
      <Group $w={167}>
        <GroupButtons $at="flex-start">
          <Big w={40} icon={<HandIcon />} lines={['Вид']} />
          <Big w={71} icon={<SelectIcon />} lines={['Выделение']} on />
          <Big w={52} icon={<EditIcon />} lines={['Правка']} />
        </GroupButtons>
        <GroupFoot>Режимы</GroupFoot>
      </Group>
      {boxed.map(g => (
        <Group key={g.lines.join(' ')} $w={g.w}>
          <GroupButtons>
            <BigButton $w={g.w - 1}><IconBox>{g.icon}</IconBox><Lines lines={g.lines} /></BigButton>
          </GroupButtons>
          <GroupFoot $low><Caret /></GroupFoot>
        </Group>
      ))}
      <Group $w={127}>
        <GroupButtons $at="flex-start">
          <Big w={62} icon={<SnapshotIcon />} lines={['Снимок']} />
          <Big w={56} icon={<PageSnapshotIcon />} lines={['Снимок', 'страницы']} />
        </GroupButtons>
        <GroupFoot>Инструменты</GroupFoot>
      </Group>
      <Group $w={79}>
        <GroupButtons><Big w={78} icon={<SettingsIcon />} lines={['Настройки']} /></GroupButtons>
      </Group>
      <Group>
        <GroupButtons $at="flex-end">
          <Big w={85} icon={<MultiDocIcon />} lines={['Много-', 'документный']} />
          <Big w={85} icon={<SingleDocIcon />} lines={['Одно-', 'документный']} />
        </GroupButtons>
        <GroupFoot $end><span>Документы</span><Chevron dir="up" c="#666" /></GroupFoot>
      </Group>
    </Ribbon>
    <Body>
      <Side>
        <SideToggle aria-label="Развернуть панель"><Chevron dir="right" c="#555" /></SideToggle>
        <SideButton $on aria-label="Страницы"><PanelIcon /></SideButton>
        <SideButton aria-label="Закладки"><BookmarkIcon /></SideButton>
        <SideButton aria-label="Слои"><LayersIcon /></SideButton>
        <SideButton aria-label="Ссылки"><GlobeIcon /></SideButton>
      </Side>
      <Splitter />
      <Center>
        <DocTabs>
          <HomeTab aria-label="Начальная страница"><HomeIcon /></HomeTab>
          <DocTab>
            <span>Informatika_Metodika_9 kl...</span>
            <button aria-label="Закрыть вкладку"><Svg w={8} h={8}><path d="M1 1l6 6M7 1L1 7" stroke="#555" strokeWidth="1.500" /></Svg></button>
          </DocTab>
        </DocTabs>
        <Viewer>
          <Canvas><DocumentPage /></Canvas>
          <Scroll>
            <ScrollButton aria-label="Вверх"><Svg w={7} h={5}><path d="M.5 4l3-3 3 3" stroke={grey} /></Svg></ScrollButton>
            <Track><TrackSpace $grow={151} /><Thumb /><TrackSpace $grow={327} /></Track>
            <ScrollButton aria-label="Вниз"><Svg w={7} h={5}><path d="M.5 1l3 3 3-3" stroke={grey} /></Svg></ScrollButton>
          </Scroll>
        </Viewer>
      </Center>
      <Splitter />
      <Side $right>
        <SideToggle $right aria-label="Свернуть панель"><Chevron dir="left" c="#555" /></SideToggle>
        <SideButton $on $right aria-label="Инструменты"><WrenchIcon /></SideButton>
        <SideButton aria-label="Поиск"><BinocularsIcon /></SideButton>
        <SideButton aria-label="Поиск в папке"><FolderFindIcon /></SideButton>
        <SideButton aria-label="Комментарии"><CommentIcon /></SideButton>
        <SideButton aria-label="Вложения"><ClipIcon /></SideButton>
        <SideButton aria-label="Подписи"><SealIcon /></SideButton>
      </Side>
    </Body>
    <SodaFooter>
      <Grip><Svg w={10} h={10}>{dots([[0, 0], [0, 4], [0, 8], [4, 4], [4, 8], [8, 8]])}</Svg></Grip>
      <SearchBox>
        <input aria-label="Поиск" placeholder="Поиск" />
        <Svg w={8} h={6}><path d="M1 1l3 3 3-3" stroke="#fff" strokeWidth="1.500" /></Svg>
        <Svg w={8} h={6}><path d="M1 5l3-3 3 3" stroke="#fff" strokeWidth="1.500" /></Svg>
      </SearchBox>
      <SearchGo aria-label="Найти"><Svg w={14} h={14}><circle cx="8.500" cy="5.500" r="4" stroke="#9c0000" strokeWidth="1.500" /><path d="M5.500 8.500L1 13" stroke="#9c0000" strokeWidth="2.500" /></Svg></SearchGo>
      <Pager>
        <RoundButton aria-label="Первая"><RoundArrow kind="first" /></RoundButton>
        <RoundButton aria-label="Предыдущая"><RoundArrow kind="prev" /></RoundButton>
        <PageField aria-label="Страница" defaultValue="36" />
        <PageCount>/112</PageCount>
        <RoundButton aria-label="Следующая"><RoundArrow kind="next" /></RoundButton>
        <RoundButton aria-label="Последняя"><RoundArrow kind="last" /></RoundButton>
      </Pager>
      <FootRight>
        <FootButton aria-label="По размеру окна"><Svg w={15} h={15}><path d="M1 5V1h4M1 1l4.500 4.500M10 1h4v4M14 1L9.500 5.500M1 10v4h4M1 14l4.500-4.500M14 10v4h-4M14 14L9.500 9.500" stroke="#fff" strokeWidth="1.300" /></Svg></FootButton>
        <FootButton aria-label="Реальный размер">
          <Svg w={14} h={15}><rect x=".6" y=".6" width="12.800" height="13.800" stroke="#fff" strokeWidth="1.200" /><text x="7" y="9" textAnchor="middle" fontSize="6" fontWeight="700" fill="#fff">100</text></Svg>
        </FootButton>
        <FootButton aria-label="Непрерывно"><Svg w={14} h={15}><path d="M1 0v5.500h12V0M3 2h8M1 15V8.500h12V15M3 11h8M3 14h8" stroke="#fff" strokeWidth="1.300" /></Svg></FootButton>
        <FootButton aria-label="Уменьшить"><RoundArrow kind="minus" /></FootButton>
        <Range type="range" aria-label="Масштаб документа" defaultValue={49} $c="#fff" $t="#fff" />
        <FootButton aria-label="Увеличить"><RoundArrow kind="plus" /></FootButton>
        <FootZoom>75%</FootZoom>
        <FootButton $w={20} aria-label="Выбор масштаба"><Svg w={8} h={6}><path d="M1 1l3 3 3-3" stroke="#fff" strokeWidth="1.500" /></Svg></FootButton>
        <Svg w={16} h={10}>{dots([[8, 0], [4, 4], [8, 4], [0, 8], [4, 8], [8, 8]])}</Svg>
      </FootRight>
    </SodaFooter>
  </SodaWindow>
);

export default function App() {
  return (
    <Desktop>
      <Global />
      <WordWindow>
        <WordTitle>
          <QuickAccess>
            <ToolButton $w={14} $mr={14} aria-label="Сохранить файл"><Svg w={14} h={14}><path d="M1 1h12v12H1z" stroke="#fff" strokeWidth="1.500" /><path d="M1 7h12M4 13v-3h6v3" stroke="#fff" strokeWidth="1.500" /></Svg></ToolButton>
            <ToolButton $w={16} aria-label="Отмена"><UndoIcon c="#fff" /></ToolButton>
            <ToolButton $w={16} aria-label="Список отмены"><Caret c="#fff" /></ToolButton>
            <ToolButton $w={30} aria-label="Повторить"><Svg w={14} h={14}><path d="M4 3a5.500 5.500 0 1 0 8 2M8 1h4.500v5" stroke="#5f82b8" strokeWidth="2" /></Svg></ToolButton>
            <ToolButton $w={18} aria-label="Настройка панели"><Svg w={6} h={6}><path d="M0 0h6v1H0zM0 3h6L3 6z" fill="#fff" /></Svg></ToolButton>
          </QuickAccess>
          <WordCaption>Документ9 - Word</WordCaption>
          <ContextTab>Работа с таблицами</ContextTab>
          <WordControls>
            <Svg w={13} h={10}><path d="M.5.5h12v9H.5zM.5 3h12M6.500 9V4.500M4.500 6.500l2-2 2 2" stroke="#7f9bc8" /></Svg>
            <Svg w={14} h={10}><path d="M3 6h9v2H3z" fill="#7f9bc8" /></Svg>
            <Svg w={14} h={10}><path d="M4.500 2.500v-2h8v5h-2M2.500 3.500h8v6h-8zM2.500 4.500h8" stroke="#7f9bc8" /></Svg>
            <Svg w={14} h={10}><path d="M3 0l9 9M12 0L3 9" stroke="#7f9bc8" strokeWidth="2" /></Svg>
          </WordControls>
        </WordTitle>
        <WordTabs>
          <WordTab>Файл</WordTab>
          <WordTab $on>Главная</WordTab>
          <ShareButton>
            <Svg w={16} h={17}><circle cx="8" cy="5.500" r="4.500" stroke="#fff" strokeWidth="1.500" /><path d="M1 16c0-4 2-6 5-6.500M9 9.500l2 1M12 10v6M9 13h6" stroke="#fff" strokeWidth="1.500" /></Svg>
            Общий доступ
          </ShareButton>
        </WordTabs>
        <WordRibbon>
          <ClipboardGroup>
            <PasteButton><PasteIcon /><span>Вставить</span><Caret /></PasteButton>
            <CommandList>
              <Command $dim><ScissorsIcon />Вырезать</Command>
              <Command $dim><CopyIcon />Копировать</Command>
              <Command><BrushIcon />Формат по образцу</Command>
            </CommandList>
            <GroupName>Буфер обмена</GroupName>
          </ClipboardGroup>
          <EditingGroup>
            <EditingBody>
              <EditingList>
                <Command>Найти&nbsp; <Caret /></Command>
                <Command>Заменить</Command>
                <Command>Выделить<Caret /></Command>
              </EditingList>
              <GroupName>Редактирование</GroupName>
            </EditingBody>
            <Collapse aria-label="Свернуть ленту"><Chevron dir="up" c="#666" /></Collapse>
          </EditingGroup>
        </WordRibbon>
        <WordStatus>
          <StatusItem>Страница 2 из 3</StatusItem>
          <StatusItem>Число слов: 279</StatusItem>
          <StatusItem><Svg w={15} h={13}><path d="M1 1h4l2 1v10l-2-1H1zM7 2l2-1h4M7 12l2-1h4M9 3l4 5M13 3L9 8" stroke="#777" /></Svg></StatusItem>
          <StatusItem>казахский</StatusItem>
          <StatusRight>
            <ViewButton aria-label="Режим чтения Word"><Svg w={13} h={13}><path d="M.5 1.500h5l1 1v9l-1-1h-5zM12.500 1.500h-5l-1 1v9l1-1h5zM2 4h3M2 6h3M2 8h3M8 4h3M8 6h3M8 8h3" stroke="#777" /></Svg></ViewButton>
            <ViewButton $on aria-label="Разметка страницы"><Svg w={14} h={13}><path d="M.5.5h13v12H.5zM2 3.500h10M2 5.500h10M2 7.500h10M2 9.500h10" stroke="#777" /></Svg></ViewButton>
            <ViewButton aria-label="Веб-документ"><Svg w={14} h={13}><path d="M6 9.500H.5v-9h11V4M2 3h8M2 5h5M2 7h4" stroke="#777" /><circle cx="10" cy="9" r="3.500" fill="#777" /><path d="M8 8l2 1 2-1" stroke="#f0f0f0" /></Svg></ViewButton>
            <StepButton aria-label="Мельче"><Svg w={6} h={2}><path d="M0 0h6v2H0z" fill="#666" /></Svg></StepButton>
            <Range type="range" aria-label="Масштаб Word" defaultValue={52} $c="#aaa" $t="#666" />
            <StepButton aria-label="Крупнее"><Svg w={8} h={8}><path d="M0 3h8v2H0zM3 0h2v8H3z" fill="#666" /></Svg></StepButton>
            <ZoomValue>110%</ZoomValue>
          </StatusRight>
        </WordStatus>
        <Soda />
      </WordWindow>
      <Taskbar>
        <StartButton aria-label="Пуск"><StartIcon /></StartButton>
        <TaskButton aria-label="Internet Explorer"><IeIcon /></TaskButton>
        <TaskButton aria-label="Chrome"><ChromeIcon /></TaskButton>
        <TaskButton $on $stack aria-label="Проводник"><ExplorerIcon /></TaskButton>
        <TaskButton aria-label="Media Player"><MediaIcon /></TaskButton>
        <TaskButton aria-label="Telegram"><TelegramIcon /></TaskButton>
        <TaskButton aria-label="Yandex"><YandexIcon /></TaskButton>
        <TaskButton $on aria-label="Yandex Browser"><YandexIcon big /></TaskButton>
        <TaskButton $on $stack aria-label="Word"><WordIcon /></TaskButton>
        <TaskButton $on $lit aria-label="Soda PDF"><SodaLogo s={32} /></TaskButton>
        <Tray>
          <Lang>RU</Lang>
          <TrayRow><Svg w={10} h={8}><path d="M7 0v8L3 4z" fill="#fff" /></Svg></TrayRow>
          <TrayRow>
            <Svg w={16} h={16}><circle cx="7" cy="7" r="6.500" fill="#fff" stroke="#1d8a98" /><path d="M4 7h6c0-4-6-4-6 0s5 3 6 2" stroke="#1d8a98" strokeWidth="1.500" /><circle cx="11.500" cy="11.500" r="3.500" fill="#eca51f" /></Svg>
            <Svg w={15} h={14}><path d="M1.500 0v14" stroke="#fff" /><path d="M3 1h5v2l2 1h5l-3 4H9L8 6H3z" fill="#fff" /></Svg>
          </TrayRow>
          <TrayRow><Svg w={15} h={14}><path d="M6 3h8v7H4V7M9 10v3M5 13h8M1 1v3h3V1M2.500 4v3" stroke="#fff" strokeWidth="1.300" /></Svg></TrayRow>
          <Clock>11:34</Clock>
          <Clock>22.11.2020</Clock>
          <ShowDesktop aria-label="Показать рабочий стол" />
        </Tray>
      </Taskbar>
    </Desktop>
  );
}
